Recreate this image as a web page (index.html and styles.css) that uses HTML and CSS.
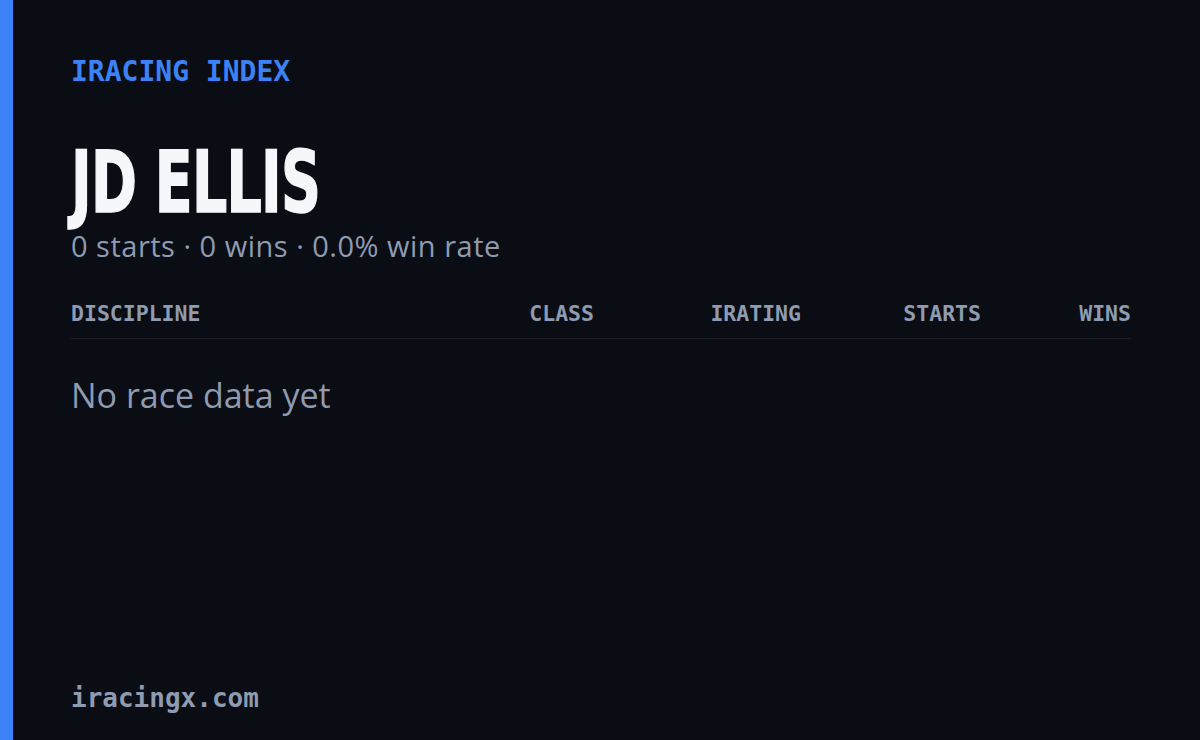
FILE: index.html
```html
<!DOCTYPE html>
<html>
<head>
<meta charset="utf-8">
<link rel="stylesheet" href="styles.css">
</head>
<body>
<div class="card">
  <div class="accent"></div>
  <main class="content">
    <div class="label">IRACING INDEX</div>
    <h1 class="name">JD ELLIS</h1>
    <div class="summary">0 starts · 0 wins · 0.0% win rate</div>
    <div class="table-head">
      <span class="col-discipline">DISCIPLINE</span>
      <span class="col-num">CLASS</span>
      <span class="col-num">IRATING</span>
      <span class="col-num">STARTS</span>
      <span class="col-num">WINS</span>
    </div>
    <div class="empty">No race data yet</div>
    <div class="footer">iracingx.com</div>
  </main>
</div>
</body>
</html>
```

FILE: styles.css
```css
html, body {
  margin: 0;
  padding: 0;
  background: #0a0d14;
}

.card {
  display: flex;
  width: 1200px;
  height: 740px;
  background: #0a0d14;
}

.accent {
  width: 13px;
  background: #3b82f6;
  flex-shrink: 0;
}

.content {
  flex: 1;
  display: flex;
  flex-direction: column;
  padding: 54px 69px 26px 58px;
}

.label {
  font-family: "DejaVu Sans Mono", monospace;
  font-weight: bold;
  font-size: 28px;
  line-height: 36px;
  color: #3b82f6;
}

.name {
  margin: 48px 0 0 0;
  font-family: "DejaVu Sans", sans-serif;
  font-stretch: condensed;
  font-weight: bold;
  font-size: 85px;
  line-height: 90px;
  color: #f5f7fa;
  letter-spacing: -1px;
  -webkit-text-stroke: 1.5px #f5f7fa;
  transform: scaleX(0.725);
  transform-origin: left center;
  white-space: nowrap;
}

.summary {
  font-family: "Open Sans", sans-serif;
  font-size: 29px;
  line-height: 36px;
  letter-spacing: 0.5px;
  color: #8e9bb0;
}

.table-head {
  margin-top: 36px;
  display: grid;
  grid-template-columns: 1fr 140px 207px 180px 150px;
  font-family: "DejaVu Sans Mono", monospace;
  font-weight: bold;
  font-size: 21.5px;
  line-height: 28px;
  color: #8e9bb0;
  padding-bottom: 10px;
  border-bottom: 1px solid #1b1f2a;
}

.col-num {
  text-align: right;
}

.empty {
  margin-top: 36px;
  font-family: "Open Sans", sans-serif;
  font-size: 34px;
  line-height: 40px;
  color: #8e9bb0;
}

.footer {
  margin-top: auto;
  font-family: "DejaVu Sans Mono", monospace;
  font-weight: bold;
  font-size: 26px;
  line-height: 32px;
  color: #8e9bb0;
}
```
